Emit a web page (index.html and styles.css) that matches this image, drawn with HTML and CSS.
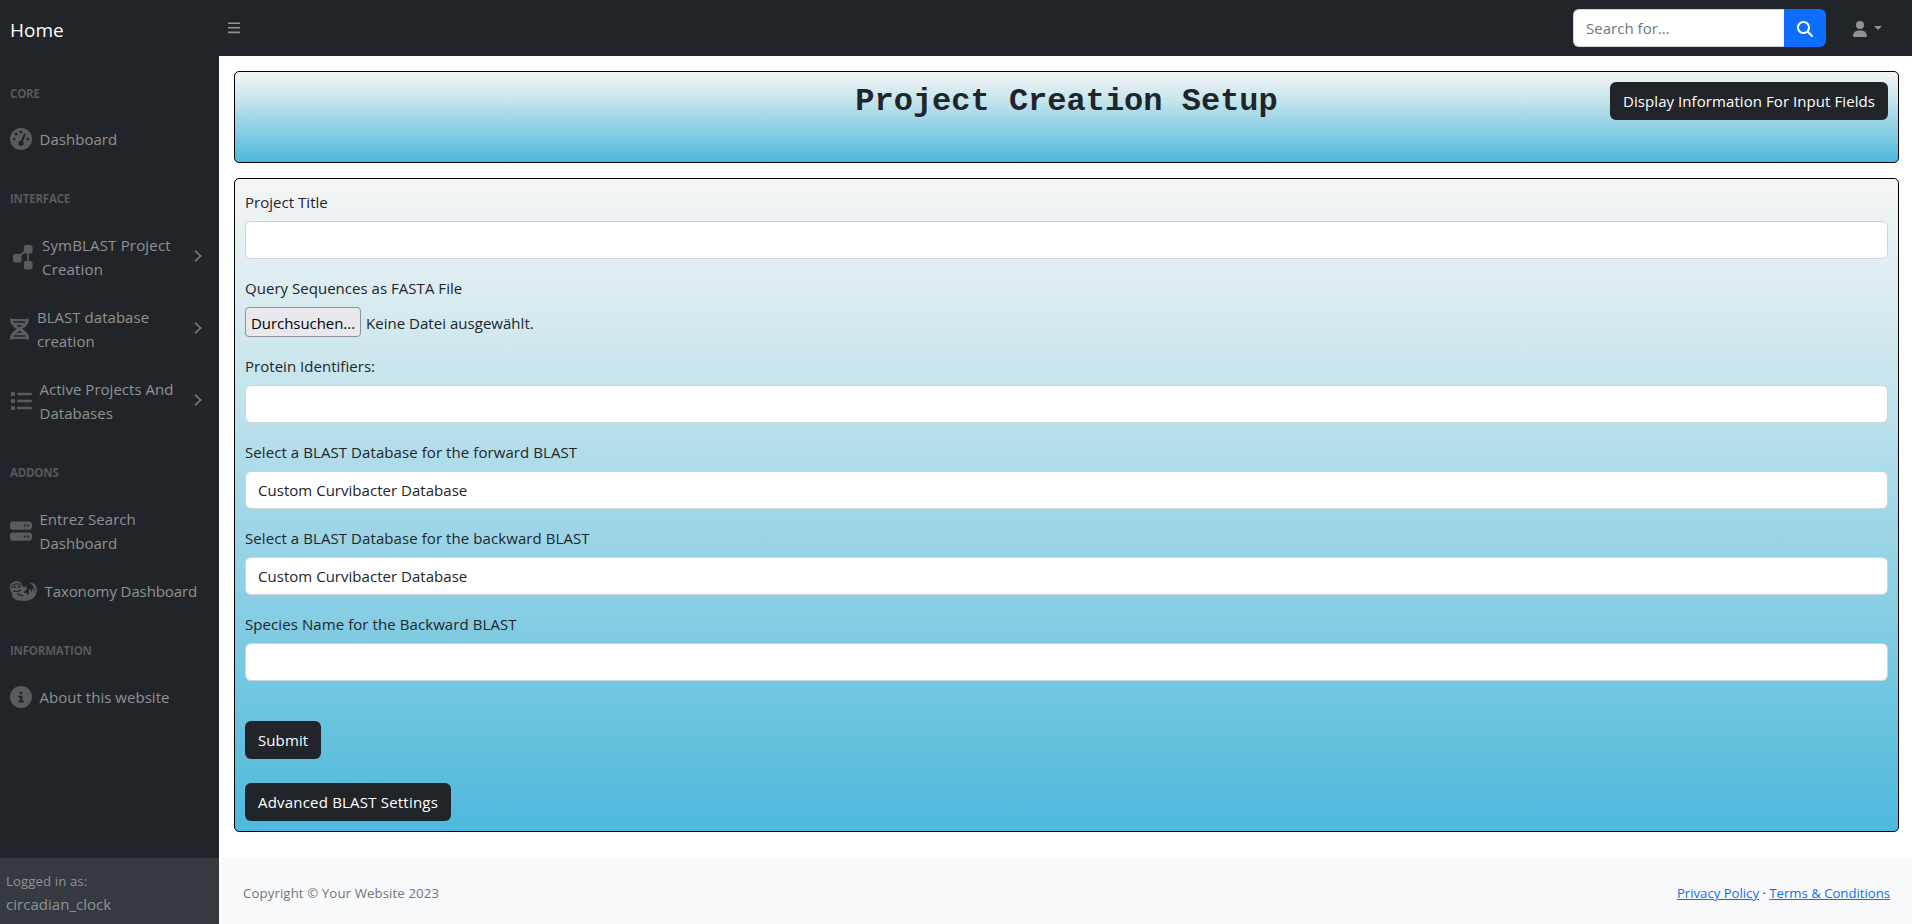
FILE: index.html
```html
<!DOCTYPE html>
<html lang="en">
<head>
<meta charset="utf-8">
<title>Project Creation Setup</title>
<link rel="stylesheet" href="styles.css">
</head>
<body>
<header class="topbar">
  <a class="brand">Home</a>
  <svg class="burger" viewBox="0 0 12 12"><path d="M0 1.3h12M0 5.8h12M0 10.4h12" stroke="currentColor" stroke-width="1.6"/></svg>
  <form class="search">
    <input class="search-input" type="text" placeholder="Search for...">
    <button class="search-btn" type="button"><svg width="16" height="16" viewBox="0 0 512 512"><path fill="currentColor" d="M416 208c0 45.900-14.900 88.300-40 122.700L502.600 457.400c12.500 12.500 12.500 32.800 0 45.300s-32.800 12.500-45.300 0L330.700 376c-34.400 25.200-76.800 40-122.700 40C93.100 416 0 322.900 0 208S93.100 0 208 0S416 93.100 416 208zM208 352a144 144 0 1 0 0-288 144 144 0 1 0 0 288z"/></svg></button>
  </form>
  <div class="user"><svg width="14" height="16" viewBox="0 0 448 512"><path fill="currentColor" d="M224 256A128 128 0 1 0 224 0a128 128 0 1 0 0 256zm-45.700 48C79.800 304 0 383.800 0 482.300C0 498.700 13.300 512 29.700 512H418.300c16.400 0 29.700-13.300 29.700-29.700C448 383.800 368.200 304 269.700 304H178.300z"/></svg><i class="caret"></i></div>
</header>
<div class="shell">
  <aside class="side">
    <nav class="menu">
      <div class="heading">Core</div>
      <a class="link"><svg class="ic" width="22" height="22" viewBox="0 0 512 512"><path fill="currentColor" fill-rule="evenodd" d="M0 256a256 256 0 1 1 512 0A256 256 0 1 1 0 256zM288 96a32 32 0 1 0-64 0 32 32 0 1 0 64 0zM256 416c35.300 0 64-28.700 64-64c0-17.400-6.900-33.100-18.100-44.600L366 161.700c5.300-12.100-.2-26.300-12.300-31.600s-26.300 .2-31.600 12.300L257.900 288c-.6 0-1.300 0-1.900 0c-35.300 0-64 28.700-64 64s28.700 64 64 64zM176 144a32 32 0 1 0-64 0 32 32 0 1 0 64 0zM96 288a32 32 0 1 0 0-64 32 32 0 1 0 0 64zm352-32a32 32 0 1 0-64 0 32 32 0 1 0 64 0z"/></svg><span>Dashboard</span></a>
      <div class="heading">Interface</div>
      <a class="link link-project"><svg class="ic" width="20" height="26" viewBox="0 0 20 26"><path d="M15 5L4 14M15 5v16" stroke="currentColor" stroke-width="1.700"/><g fill="currentColor"><rect x="11" y="1" width="8.500" height="8.500" rx="2"/><rect x="0" y="10" width="8.500" height="8.500" rx="2"/><rect x="11" y="17" width="8.500" height="8.500" rx="2"/></g></svg><span>SymBLAST Project Creation</span><svg class="chev" viewBox="0 0 8 12"><path d="M1 .7L6.500 6 1 11.300"/></svg></a>
      <a class="link"><svg class="ic ic-dna" width="19" height="22" viewBox="0 0 19 22" fill="none" stroke="currentColor"><path stroke-width="3" stroke-linecap="round" d="M1.500 1.800C1.500 11 17.500 11 17.500 20.200M17.500 1.800C17.500 11 1.500 11 1.500 20.200"/><path stroke-width="2.300" d="M1.500 2.200h16M4 6h11M4 16h11M1.500 19.800h16"/></svg><span>BLAST database creation</span><svg class="chev" viewBox="0 0 8 12"><path d="M1 .7L6.500 6 1 11.300"/></svg></a>
      <a class="link"><svg class="ic" width="22" height="20" viewBox="0 0 22 20" fill="currentColor"><rect x="1" y="1" width="4" height="4" rx=".8"/><rect x="1" y="8" width="4" height="4" rx=".8"/><rect x="1" y="15" width="4" height="4" rx=".8"/><rect x="7" y="1.700" width="15" height="2.600" rx="1.300"/><rect x="7" y="8.700" width="15" height="2.600" rx="1.300"/><rect x="7" y="15.700" width="15" height="2.600" rx="1.300"/></svg><span>Active Projects And Databases</span><svg class="chev" viewBox="0 0 8 12"><path d="M1 .7L6.500 6 1 11.300"/></svg></a>
      <div class="heading">Addons</div>
      <a class="link"><svg class="ic" width="22" height="22" viewBox="0 0 512 512"><path fill="currentColor" fill-rule="evenodd" d="M64 32C28.700 32 0 60.700 0 96v64c0 35.300 28.700 64 64 64H448c35.300 0 64-28.700 64-64V96c0-35.300-28.700-64-64-64H64zm280 72a24 24 0 1 1 0 48 24 24 0 1 1 0-48zm48 24a24 24 0 1 1 48 0 24 24 0 1 1-48 0zM64 288c-35.300 0-64 28.700-64 64v64c0 35.300 28.700 64 64 64H448c35.300 0 64-28.700 64-64V352c0-35.300-28.700-64-64-64H64zm280 72a24 24 0 1 1 0 48 24 24 0 1 1 0-48zm56 24a24 24 0 1 1 48 0 24 24 0 1 1-48 0z"/></svg><span>Entrez Search Dashboard</span></a>
      <a class="link link-tax"><svg class="ic" width="27" height="20" viewBox="0 0 27 20"><path fill="currentColor" d="M0 6C0 2.500 3 .3 6.500 .3c3.500 0 5.500 1.700 6 4.700l2.500 1.500V5c.8-.6 1.500.3 1.500 1.500v2l-2.300 2v1.500h3v2c1.300 0 1.800-.7 1.800-1.700V9c0-1 1.200-1.300 1.600-.3l1 2.500 1.100-3.200c.4-.8 1.300-.5 1.300.5v4C25.500 9 24.500 5 19.500 1.800c0 0 7-.8 7.300 6.700 0 6.500-4 11.200-10.500 11.200H11C5 19.700 1.500 16.500 2 12 .8 10.500 0 8.500 0 6z"/><path fill="none" stroke="#212529" stroke-width="1.100" d="M2 7.500c-.5-5 8-6.500 9-2M3.500 9.500c1.500 1.500 5 1.500 7-.5M7 12.500c2 2 4 2.300 6.500 2"/><circle cx="4.800" cy="6" r="1.100" fill="#212529"/><circle cx="8.600" cy="5.800" r="1.100" fill="#212529"/></svg><span>Taxonomy Dashboard</span></a>
      <div class="heading">Information</div>
      <a class="link"><svg class="ic" width="22" height="22" viewBox="0 0 512 512"><path fill="currentColor" fill-rule="evenodd" d="M256 512A256 256 0 1 0 256 0a256 256 0 1 0 0 512zM216 336h24V272H216c-13.300 0-24-10.700-24-24s10.700-24 24-24h48c13.300 0 24 10.700 24 24v88h8c13.300 0 24 10.700 24 24s-10.700 24-24 24H216c-13.300 0-24-10.700-24-24s10.700-24 24-24zm40-208a32 32 0 1 1 0 64 32 32 0 1 1 0-64z"/></svg><span>About this website</span></a>
    </nav>
    <div class="login"><div class="small">Logged in as:</div><div class="name">circadian_clock</div></div>
  </aside>
  <div class="content">
    <main class="main">
      <section class="banner"><h1 class="title">Project Creation Setup</h1><button class="btn btn-info" type="button">Display Information For Input Fields</button></section>
      <form class="panel">
        <label class="label">Project Title</label>
        <input class="control" type="text">
        <label class="label">Query Sequences as FASTA File</label>
        <div class="file"><button class="browse" type="button">Durchsuchen...</button><span class="nofile">Keine Datei ausgewählt.</span></div>
        <label class="label">Protein Identifiers:</label>
        <input class="control" type="text">
        <label class="label label-db">Select a BLAST Database for the forward BLAST</label>
        <div class="control">Custom Curvibacter Database</div>
        <label class="label label-db">Select a BLAST Database for the backward BLAST</label>
        <div class="control">Custom Curvibacter Database</div>
        <label class="label label-db">Species Name for the Backward BLAST</label>
        <input class="control" type="text">
        <button class="btn btn-submit" type="button">Submit</button>
        <button class="btn btn-adv" type="button">Advanced BLAST Settings</button>
      </form>
    </main>
    <footer class="footer"><span class="copy">Copyright © Your Website 2023</span><span class="legal"><a class="ref">Privacy Policy</a> · <a class="ref">Terms &amp; Conditions</a></span></footer>
  </div>
</div>
</body>
</html>
```
FILE: styles.css
```css
*{box-sizing:border-box}
body{margin:0;height:924px;display:flex;flex-direction:column;overflow:hidden;background:#fff;color:#212529;font:15px/24px "Open Sans","Noto Sans",sans-serif;letter-spacing:.03px}
input,button{font:inherit;letter-spacing:inherit}
.topbar{height:56px;flex:none;display:flex;align-items:center;background:#212529;padding-right:30px}
.brand{width:228px;padding:4px 0 0 10px;color:#fff;font-size:19px}
.burger{width:12px;height:12px;color:#909294}
.search{display:flex;width:253px;height:38px;margin-left:auto}
.search-input{flex:1;min-width:0;border:1px solid #ced4da;border-right:0;border-radius:6px 0 0 6px;padding:1px 12px;background:#fff}
.search-input::placeholder{color:#6c757d;opacity:1}
.search-btn{width:42px;padding:2px 0 0;border:0;border-radius:0 6px 6px 0;background:#0d6efd;color:#fff;display:flex;align-items:center;justify-content:center}
.user{display:flex;align-items:center;gap:7px;margin-left:27px;padding-top:2px;color:#909294}
.caret{border:4px solid transparent;border-top-color:currentColor;border-bottom:0;margin-top:-3px}
.shell{flex:1;display:flex;min-height:0}
.side{width:219px;flex:none;display:flex;flex-direction:column;background:#212529;color:#909294}
.menu{flex:1}
.heading{padding:29px 10px 11px;font-size:11.500px;line-height:18px;height:58px;font-weight:700;text-transform:uppercase;color:#575a5d;letter-spacing:-.2px}
.heading:not(:first-child){padding-top:28px}
.link{display:flex;align-items:center;min-height:48px;padding:13px 17px 11px 10px;line-height:24px}
.link:first-of-type{height:48px}
.ic{flex:none;margin-right:7.500px;color:#595c5f}
.ic-dna{margin-right:8px}
.link-project{letter-spacing:.18px}
.link-project .ic{margin:0 9px 0 3px}
.link-tax{letter-spacing:-.1px}
.chev{width:8px;height:12px;flex:none;margin:-3px 0 0 auto;fill:none;stroke:#777a7d;stroke-width:1.600}
.login{height:66px;padding:11px 6px;background:#343a40}
.small{font-size:13.200px;line-height:24px;letter-spacing:.1px}
.name{line-height:23px}
.content{flex:1;display:flex;flex-direction:column;min-width:0}
.main{flex:1;padding:15px 13px 0 15px}
.banner,.panel{border:1px solid #000;border-radius:5px;background:linear-gradient(#f5f5f5,#c0e3eb 35%,#b0dcea 43%,#66c2de 85%,#4fb8dd)}
.banner{height:92px;display:grid;grid-template-columns:1fr auto 1fr;align-items:start;padding:10px}
.title{grid-column:2;margin:0;padding-top:1px;font:700 32px/38px "Liberation Mono",monospace;letter-spacing:0}
.btn{display:block;height:38px;padding:1px 13px;border:0;border-radius:6px;background:#212529;color:#fff}
.btn-info{justify-self:end;width:278px;letter-spacing:.07px;white-space:nowrap}
.panel{height:654px;margin-top:15px;padding:11px 10px 0}
.label{display:block;height:24px;margin-bottom:7px}
.label-db{letter-spacing:.08px}
.control{display:block;width:100%;height:38px;margin-bottom:17px;padding:6px 12px;border:1px solid #ced4da;border-radius:6px;background:#fff}
.file{height:30px;display:flex;align-items:center;margin-bottom:17px}
.browse{width:116px;height:30px;padding:2px 0 0;border:1px solid #8f8f9d;border-radius:4px;background:#e9e9ed;color:#000;letter-spacing:-.05px}
.nofile{padding:2px 0 0 5px}
.btn-submit{margin-top:40px;width:76px;letter-spacing:.1px}
.btn-adv{margin-top:24px;width:206px;letter-spacing:.2px;white-space:nowrap}
.footer{height:66px;flex:none;display:flex;align-items:center;justify-content:space-between;padding:4px 22px 0 24px;background:#f8f9fa;font-size:13.200px}
.copy{color:#6c757d;letter-spacing:.12px}
.legal{letter-spacing:-.02px}
.ref{color:#0d6efd;text-decoration:underline}
```
